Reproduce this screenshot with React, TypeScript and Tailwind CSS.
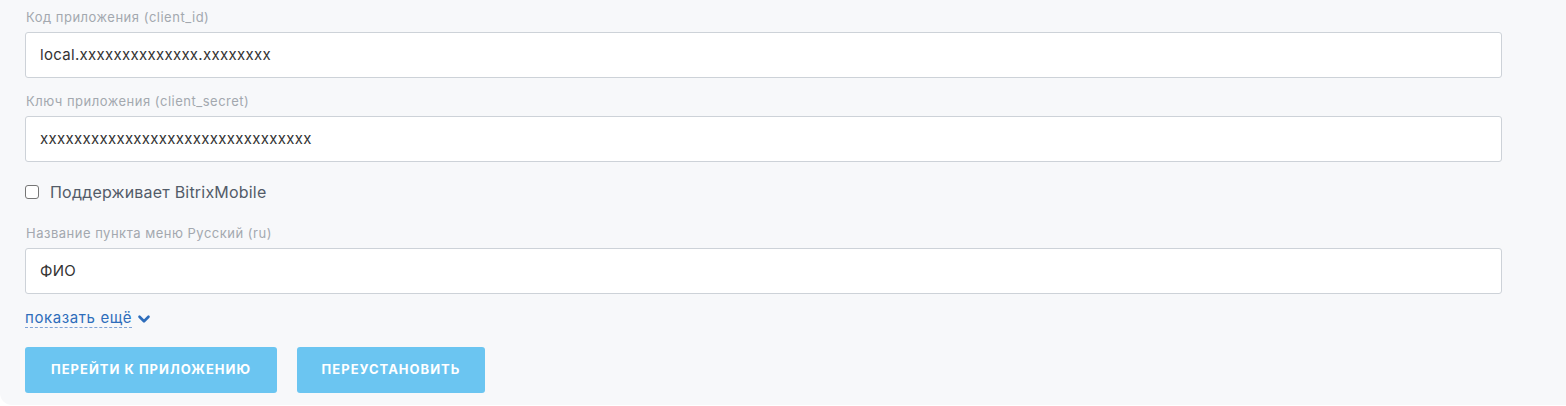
import { ChevronDown } from "lucide-react";

const fields = [
  { label: "Код приложения (client_id)", value: "local.xxxxxxxxxxxxxx.xxxxxxxx" },
  { label: "Ключ приложения (client_secret)", value: "xxxxxxxxxxxxxxxxxxxxxxxxxxxxxxxx" },
];

function Field({ label, value }: { label: string; value: string }) {
  return (
    <div className="flex flex-col">
      <label className="text-[13px] leading-[16px] tracking-[0.5px] text-[#a3a8af] mb-[7px] pl-px">{label}</label>
      <div className="h-[46px] w-full flex items-center rounded-[3px] border border-[#cdd2d8] bg-white px-[14px] text-[15px] tracking-[0.3px] text-[#333]">
        {value}
      </div>
    </div>
  );
}

export default function App() {
  return (
    <div className="bg-white min-h-[406px]" style={{ fontFamily: "Inter, 'Helvetica Neue', Arial, sans-serif" }}>
      <div className="bg-[#f7f8fa] rounded-bl-[12px] pl-[25px] pr-[64px] pt-[9px] pb-[12px]">
        <div className="flex flex-col gap-[15px]">
          {fields.map((f) => (
            <Field key={f.label} label={f.label} value={f.value} />
          ))}
        </div>
        <label className="flex items-center gap-[11px] mt-[22px] h-[16px] text-[16px] tracking-[0.2px] text-[#535c69]">
          <span className="w-[14px] h-[14px] rounded-[3px] border border-[#767676] bg-white" />
          Поддерживает BitrixMobile
        </label>
        <div className="mt-[25px]">
          <Field label="Название пункта меню Русский (ru)" value="ФИО" />
        </div>
        <div className="mt-[14px] flex items-center gap-[3px] text-[15px] tracking-[0.6px] text-[#2e6dbb]">
          <span className="border-b border-dashed border-[#7fa3d6] leading-[18px]">показать ещё</span>
          <ChevronDown size={18} strokeWidth={3.5} className="mt-[2px]" />
        </div>
        <div className="mt-[19px] flex gap-[20px]">
          <button className="h-[46px] w-[252px] rounded-[3px] bg-[#6bc5f1] text-white text-[13px] font-bold tracking-[1px]">
            ПЕРЕЙТИ К ПРИЛОЖЕНИЮ
          </button>
          <button className="h-[46px] w-[188px] rounded-[3px] bg-[#6bc5f1] text-white text-[13px] font-bold tracking-[1px]">
            ПЕРЕУСТАНОВИТЬ
          </button>
        </div>
      </div>
    </div>
  );
}
